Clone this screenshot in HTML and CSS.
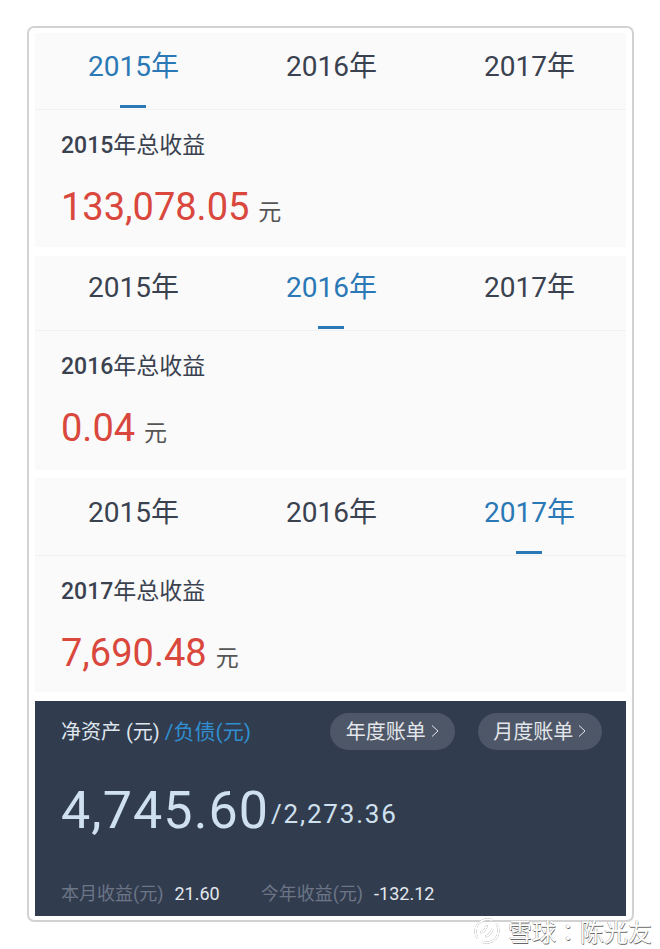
FILE: index.html
```html
<!DOCTYPE html>
<html lang="zh">
<head>
<meta charset="utf-8">
<title>年度收益</title>
<link rel="stylesheet" href="styles.css">
</head>
<body>
<main class="frame">
  <section class="card card-2015">
    <div class="tabs">
      <div class="tab active">2015年</div>
      <div class="tab">2016年</div>
      <div class="tab">2017年</div>
    </div>
    <div class="body">
      <div class="title"><span class="year">2015</span>年总收益</div>
      <div class="amount"><span class="num">133,078.05</span><span class="unit">元</span></div>
    </div>
  </section>
  <section class="card card-2016">
    <div class="tabs">
      <div class="tab">2015年</div>
      <div class="tab active">2016年</div>
      <div class="tab">2017年</div>
    </div>
    <div class="body">
      <div class="title"><span class="year">2016</span>年总收益</div>
      <div class="amount"><span class="num">0.04</span><span class="unit">元</span></div>
    </div>
  </section>
  <section class="card card-2017">
    <div class="tabs">
      <div class="tab">2015年</div>
      <div class="tab">2016年</div>
      <div class="tab active">2017年</div>
    </div>
    <div class="body">
      <div class="title"><span class="year">2017</span>年总收益</div>
      <div class="amount"><span class="num">7,690.48</span><span class="unit">元</span></div>
    </div>
  </section>
  <section class="dark">
    <div class="dark-top">
      <div class="labels"><span class="label-a">净资产 (元)</span><span class="label-b">/负债(元)</span></div>
      <div class="pills">
        <div class="pill"><span class="pill-text">年度账单</span><svg class="chev" viewBox="0 0 8 14" width="8" height="14"><path d="M1 1.5 7 7 1 12.5" fill="none" stroke="currentColor" stroke-width="1"/></svg></div>
        <div class="pill"><span class="pill-text">月度账单</span><svg class="chev" viewBox="0 0 8 14" width="8" height="14"><path d="M1 1.5 7 7 1 12.5" fill="none" stroke="currentColor" stroke-width="1"/></svg></div>
      </div>
    </div>
    <div class="worth"><span class="big">4,745.60</span><span class="small">/2,273.36</span></div>
    <div class="stats">
      <span class="stat-l">本月收益(元)</span><span class="stat-v">21.60</span>
      <span class="stat-l second">今年收益(元)</span><span class="stat-v">-132.12</span>
    </div>
  </section>
</main>
<div class="mark">
  <svg class="mark-logo" viewBox="0 0 28 28" width="28" height="28"><path d="M19 3.2A12 12 0 0 0 4.500 21M9 24.800A12 12 0 0 0 23.500 7" fill="none" stroke="#fff" stroke-width="2"/><path d="M7.500 15.500c3-1 5.500-3.500 6.500-7M12.500 19.500c3-1 6-4 7-7.500" fill="none" stroke="#fff" stroke-width="2"/></svg>
  <span class="mark-text" lang="zh-TW">雪球：陈光友</span>
</div>
</body>
</html>
```
FILE: styles.css
```css
* { box-sizing: border-box; }
html, body { margin: 0; padding: 0; }
body {
  width: 660px;
  height: 949px;
  background: #fff;
  position: relative;
  overflow: hidden;
  font-family: Roboto, "Noto Sans CJK SC", sans-serif;
  padding: 26px 0 0 27px;
}
.frame {
  width: 607px;
  height: 896px;
  border: 2px solid #d2d2d2;
  border-radius: 7px;
  background: #fff;
  padding: 5px 6px 4px;
  display: flex;
  flex-direction: column;
}
.card { background: #fafafa; height: 214px; flex: none; }
.card-2015 { margin-bottom: 9px; }
.card-2016 { margin-bottom: 8px; }
.card-2017 { margin-bottom: 9px; }
.tabs {
  display: grid;
  grid-template-columns: 198px 198px 198px;
  height: 77px;
  border-bottom: 1px solid #f1f1f1;
}
.card-2016 .tabs { height: 75px; }
.card-2017 .tabs { height: 78px; }
.tab {
  position: relative;
  text-align: center;
  font-size: 28px;
  line-height: 33px;
  padding-top: 17px;
  padding-right: 1px;
  color: #3a4250;
}
.card-2016 .tab { padding-top: 15px; }
.card-2017 .tab { padding-top: 18px; }
.tab.active { color: #2a78b5; }
.tab.active::after {
  content: "";
  position: absolute;
  left: 50%;
  margin-left: -14px;
  bottom: 1px;
  width: 26px;
  height: 3px;
  background: #2a78b5;
}
.body { padding: 21px 0 0 26px; }
.title {
  font-size: 23px;
  line-height: 30px;
  color: #3a4250;
}
.year { font-weight: 500; }
.amount {
  margin-top: 24px;
  display: flex;
  align-items: baseline;
  line-height: 44px;
}
.num {
  font-size: 38px;
  color: #d9473d;
}
.unit {
  font-size: 23px;
  color: #555;
  margin-left: 9px;
}
.dark {
  flex: 1;
  background: #323c4f;
  padding: 12px 24px 0 26px;
}
.dark-top {
  display: flex;
  justify-content: space-between;
  align-items: center;
  height: 37px;
}
.labels { font-size: 20px; padding-bottom: 4px; }
.label-a { color: #dfe6ed; }
.label-b { color: #2f8fd0; margin-left: 5px; font-size: 21px; }
.pills { display: flex; gap: 23px; }
.pill {
  height: 37px;
  width: 124.5px;
  border-radius: 18.5px;
  background: #4e5768;
  color: #e3e6ea;
  font-size: 20px;
  display: flex;
  align-items: center;
  justify-content: center;
  gap: 5px;
}
.pill-text { padding-bottom: 3px; }
.chev { margin-bottom: 2px; }
.worth {
  margin-top: 31px;
  line-height: 60px;
  height: 60px;
  white-space: nowrap;
}
.big {
  font-size: 52px;
  letter-spacing: 1.1px;
  color: #cfe0ee;
}
.small {
  font-size: 26px;
  letter-spacing: 1.8px;
  color: #cfe0ee;
  margin-left: 2px;
  vertical-align: 5px;
}
.stats {
  margin-top: 38px;
  display: flex;
  align-items: baseline;
  font-size: 18px;
}
.stat-l { color: #6b7586; }
.stat-v { color: #e3e8ee; margin-left: 11px; }
.second { margin-left: 41px; }
.mark {
  position: absolute;
  left: 473px;
  top: 915px;
  display: flex;
  align-items: center;
  gap: 7px;
}
.mark-logo { filter: drop-shadow(0.5px 0.5px 0.5px #666); }
.mark-text {
  font-family: "Noto Sans CJK TC", sans-serif;
  font-size: 24px;
  line-height: 32px;
  color: #fff;
  text-shadow: 0.5px 0.5px 0.6px #666, -0.5px 0 0.5px #999;
}
```
